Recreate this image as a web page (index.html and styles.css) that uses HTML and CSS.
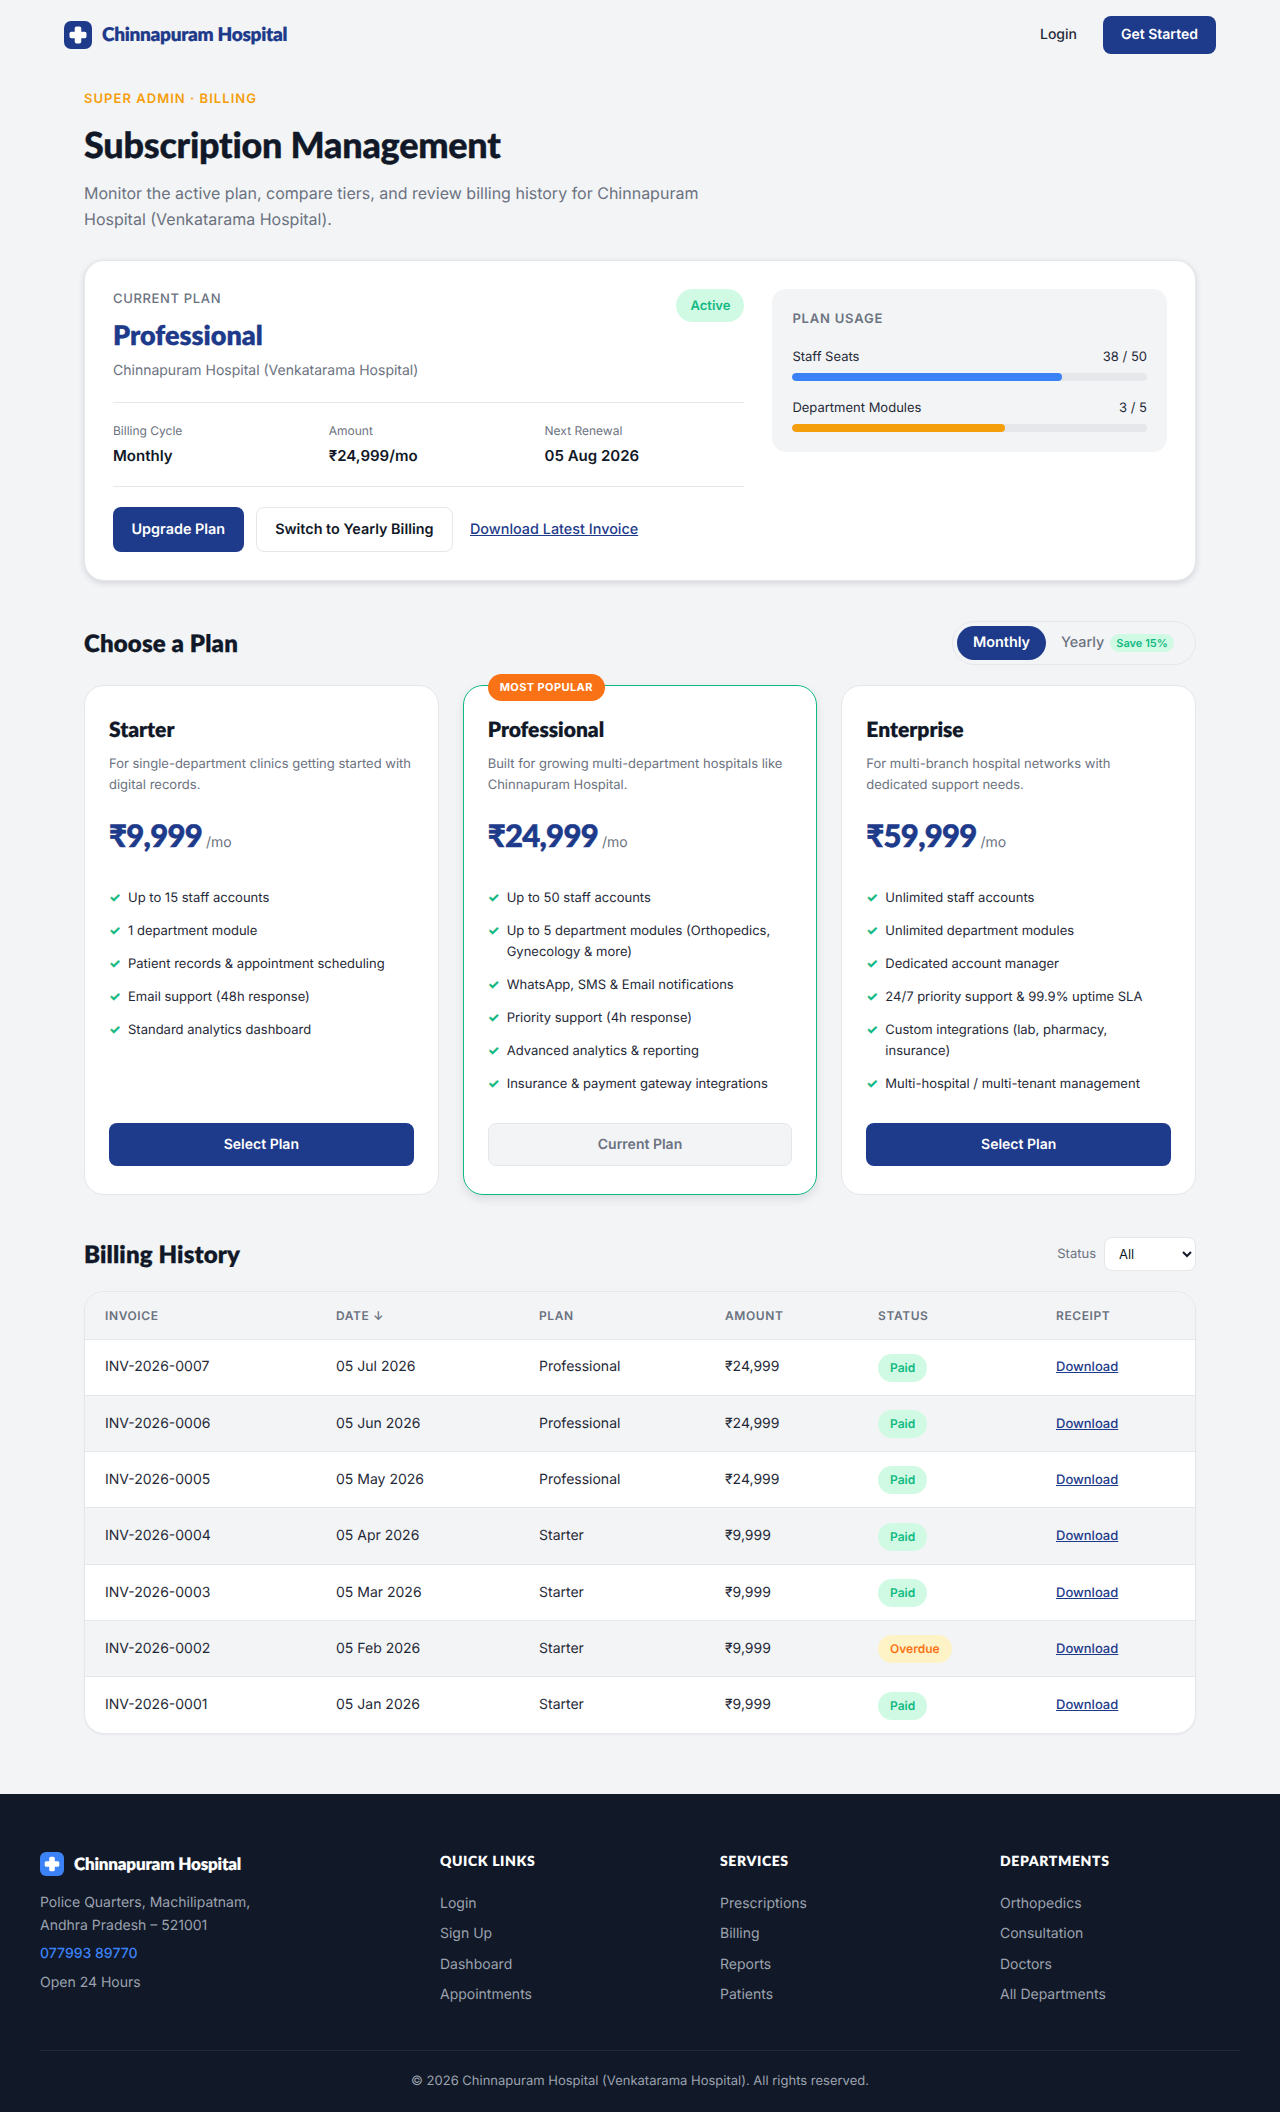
FILE: index.html
```html
<!DOCTYPE html>
<html lang="en">
<head>
<meta charset="utf-8">
<title>Subscription Management</title>
<link rel="stylesheet" href="styles.css">
</head>
<body>
<header class="nav">
  <a class="brand" href="#">
    <svg class="logo" viewBox="0 0 28 28"><rect width="28" height="28" rx="7" fill="#1e3a8a"/><g fill="#fff"><rect x="10.75" y="5.5" width="6.5" height="17" rx="1.8"/><rect x="5.5" y="10.75" width="17" height="6.5" rx="1.8"/></g></svg>
    <span class="brand-name">Chinnapuram Hospital</span>
  </a>
  <nav class="nav-actions">
    <a class="nav-login" href="#">Login</a>
    <a class="nav-cta" href="#">Get Started</a>
  </nav>
</header>

<main class="page">
  <p class="eyebrow">SUPER ADMIN · BILLING</p>
  <h1 class="title">Subscription Management</h1>
  <p class="lede">Monitor the active plan, compare tiers, and review billing history for Chinnapuram Hospital (Venkatarama Hospital).</p>

  <section class="current">
    <div class="current-main">
      <div class="current-head">
        <div>
          <p class="current-label">CURRENT PLAN</p>
          <h2 class="current-name">Professional</h2>
          <p class="current-org">Chinnapuram Hospital (Venkatarama Hospital)</p>
        </div>
        <span class="badge badge-active">Active</span>
      </div>
      <div class="facts">
        <div><p class="fact-label">Billing Cycle</p><p class="fact-value">Monthly</p></div>
        <div><p class="fact-label">Amount</p><p class="fact-value">₹24,999/mo</p></div>
        <div><p class="fact-label">Next Renewal</p><p class="fact-value">05 Aug 2026</p></div>
      </div>
      <div class="current-actions">
        <a class="btn btn-primary" href="#">Upgrade Plan</a>
        <a class="btn btn-outline" href="#">Switch to Yearly Billing</a>
        <a class="invoice-link" href="#">Download Latest Invoice</a>
      </div>
    </div>
    <aside class="usage">
      <p class="usage-title">PLAN USAGE</p>
      <div class="usage-row"><span>Staff Seats</span><span>38 / 50</span></div>
      <div class="bar"><div class="fill fill-blue" style="width:76%"></div></div>
      <div class="usage-row"><span>Department Modules</span><span>3 / 5</span></div>
      <div class="bar"><div class="fill fill-amber" style="width:60%"></div></div>
    </aside>
  </section>

  <div class="section-head plans-head">
    <h2 class="section-title">Choose a Plan</h2>
    <div class="toggle">
      <span class="toggle-on">Monthly</span>
      <span class="toggle-off">Yearly <span class="save">Save 15%</span></span>
    </div>
  </div>

  <section class="plans">
    <article class="plan">
      <h3 class="plan-name">Starter</h3>
      <p class="plan-desc">For single-department clinics getting started with digital records.</p>
      <p class="plan-price"><span class="amount">₹9,999</span> <span class="per">/mo</span></p>
      <ul class="features">
        <li>Up to 15 staff accounts</li>
        <li>1 department module</li>
        <li>Patient records &amp; appointment scheduling</li>
        <li>Email support (48h response)</li>
        <li>Standard analytics dashboard</li>
      </ul>
      <a class="btn btn-primary btn-block" href="#">Select Plan</a>
    </article>
    <article class="plan plan-featured">
      <span class="popular">MOST POPULAR</span>
      <h3 class="plan-name">Professional</h3>
      <p class="plan-desc">Built for growing multi-department hospitals like Chinnapuram Hospital.</p>
      <p class="plan-price"><span class="amount">₹24,999</span> <span class="per">/mo</span></p>
      <ul class="features">
        <li>Up to 50 staff accounts</li>
        <li>Up to 5 department modules (Orthopedics, Gynecology &amp; more)</li>
        <li>WhatsApp, SMS &amp; Email notifications</li>
        <li>Priority support (4h response)</li>
        <li>Advanced analytics &amp; reporting</li>
        <li>Insurance &amp; payment gateway integrations</li>
      </ul>
      <a class="btn btn-current btn-block" href="#">Current Plan</a>
    </article>
    <article class="plan">
      <h3 class="plan-name">Enterprise</h3>
      <p class="plan-desc">For multi-branch hospital networks with dedicated support needs.</p>
      <p class="plan-price"><span class="amount">₹59,999</span> <span class="per">/mo</span></p>
      <ul class="features">
        <li>Unlimited staff accounts</li>
        <li>Unlimited department modules</li>
        <li>Dedicated account manager</li>
        <li>24/7 priority support &amp; 99.9% uptime SLA</li>
        <li>Custom integrations (lab, pharmacy, insurance)</li>
        <li>Multi-hospital / multi-tenant management</li>
      </ul>
      <a class="btn btn-primary btn-block" href="#">Select Plan</a>
    </article>
  </section>

  <div class="section-head history-head">
    <h2 class="section-title">Billing History</h2>
    <label class="status-filter">Status
      <select class="status-select"><option>All</option><option>Paid</option><option>Overdue</option></select>
    </label>
  </div>

  <div class="table-wrap">
    <table class="history">
      <thead>
        <tr>
          <th class="col-invoice">INVOICE</th>
          <th class="col-date">DATE ↓</th>
          <th class="col-plan">PLAN</th>
          <th class="col-amount">AMOUNT</th>
          <th class="col-status">STATUS</th>
          <th class="col-receipt">RECEIPT</th>
        </tr>
      </thead>
      <tbody>
        <tr><td>INV-2026-0007</td><td>05 Jul 2026</td><td>Professional</td><td>₹24,999</td><td><span class="pill pill-paid">Paid</span></td><td><a class="dl" href="#">Download</a></td></tr>
        <tr><td>INV-2026-0006</td><td>05 Jun 2026</td><td>Professional</td><td>₹24,999</td><td><span class="pill pill-paid">Paid</span></td><td><a class="dl" href="#">Download</a></td></tr>
        <tr><td>INV-2026-0005</td><td>05 May 2026</td><td>Professional</td><td>₹24,999</td><td><span class="pill pill-paid">Paid</span></td><td><a class="dl" href="#">Download</a></td></tr>
        <tr><td>INV-2026-0004</td><td>05 Apr 2026</td><td>Starter</td><td>₹9,999</td><td><span class="pill pill-paid">Paid</span></td><td><a class="dl" href="#">Download</a></td></tr>
        <tr><td>INV-2026-0003</td><td>05 Mar 2026</td><td>Starter</td><td>₹9,999</td><td><span class="pill pill-paid">Paid</span></td><td><a class="dl" href="#">Download</a></td></tr>
        <tr><td>INV-2026-0002</td><td>05 Feb 2026</td><td>Starter</td><td>₹9,999</td><td><span class="pill pill-overdue">Overdue</span></td><td><a class="dl" href="#">Download</a></td></tr>
        <tr><td>INV-2026-0001</td><td>05 Jan 2026</td><td>Starter</td><td>₹9,999</td><td><span class="pill pill-paid">Paid</span></td><td><a class="dl" href="#">Download</a></td></tr>
      </tbody>
    </table>
  </div>
</main>

<footer class="footer">
  <div class="footer-grid">
    <div class="footer-about">
      <a class="footer-brand" href="#">
        <svg class="footer-logo" viewBox="0 0 28 28"><rect width="28" height="28" rx="7" fill="#3b82f6"/><g fill="#fff"><rect x="10.75" y="5.5" width="6.5" height="17" rx="1.8"/><rect x="5.5" y="10.75" width="17" height="6.5" rx="1.8"/></g></svg>
        <span class="footer-brand-name">Chinnapuram Hospital</span>
      </a>
      <p class="footer-address">Police Quarters, Machilipatnam,<br>Andhra Pradesh – 521001</p>
      <p class="footer-phone">077993 89770</p>
      <p class="footer-hours">Open 24 Hours</p>
    </div>
    <div>
      <h4 class="footer-title">QUICK LINKS</h4>
      <ul class="footer-links"><li><a href="#">Login</a></li><li><a href="#">Sign Up</a></li><li><a href="#">Dashboard</a></li><li><a href="#">Appointments</a></li></ul>
    </div>
    <div>
      <h4 class="footer-title">SERVICES</h4>
      <ul class="footer-links"><li><a href="#">Prescriptions</a></li><li><a href="#">Billing</a></li><li><a href="#">Reports</a></li><li><a href="#">Patients</a></li></ul>
    </div>
    <div>
      <h4 class="footer-title">DEPARTMENTS</h4>
      <ul class="footer-links"><li><a href="#">Orthopedics</a></li><li><a href="#">Consultation</a></li><li><a href="#">Doctors</a></li><li><a href="#">All Departments</a></li></ul>
    </div>
  </div>
  <p class="footer-copy">© 2026 Chinnapuram Hospital (Venkatarama Hospital). All rights reserved.</p>
</footer>
</body>
</html>
```
FILE: styles.css
```css
* { box-sizing: border-box; }
html, body { margin: 0; padding: 0; }
body {
  background: #f3f4f6;
  color: #111827;
  font-family: Inter, "Liberation Sans", sans-serif;
  font-size: 14px;
  line-height: 1.6;
  text-rendering: geometricPrecision;
}
a { color: inherit; text-decoration: none; }
p, h1, h2, h3, h4, ul { margin: 0; padding: 0; }
ul { list-style: none; }

.nav {
  height: 70px;
  padding: 0 64px;
  display: flex;
  align-items: center;
  justify-content: space-between;
}
.brand { display: flex; align-items: center; gap: 10px; }
.logo { width: 28px; height: 28px; display: block; }
.brand-name {
  font-family: Lato, sans-serif;
  font-weight: 800;
  font-size: 19px;
  letter-spacing: -.3px;
  color: #1e3a8a;
  -webkit-text-stroke: .2px currentColor;
}
.nav-actions { display: flex; align-items: center; gap: 26px; }
.nav-login { font-size: 14px; font-weight: 500; color: #1f2937; }
.nav-cta {
  background: #1e3a8a;
  color: #fff;
  font-size: 14px;
  font-weight: 600;
  height: 38px;
  line-height: 38px;
  padding: 0 18px;
  border-radius: 8px;
}

.page { padding: 20px 84px 60px; }
.eyebrow {
  color: #f59e0b;
  font-size: 13px;
  font-weight: 600;
  letter-spacing: 1.04px;
  line-height: 18px;
}
.title {
  font-family: Lato, sans-serif;
  font-weight: 900;
  font-size: 36px;
  line-height: 44px;
  letter-spacing: -.25px;
  margin-top: 14px;
  color: #111827;
  -webkit-text-stroke: .4px currentColor;
}
.lede {
  color: #6b7280;
  font-size: 16px;
  line-height: 26px;
  max-width: 640px;
  margin-top: 14px;
}

.current {
  margin-top: 28px;
  background: #fff;
  border: 1px solid #e5e7eb;
  border-radius: 20px;
  box-shadow: 0 2px 6px rgba(17, 24, 39, .14);
  padding: 28px;
  display: grid;
  grid-template-columns: 1.6fr 1fr;
  gap: 28px;
  align-items: start;
}
.current-head { display: flex; justify-content: space-between; align-items: flex-start; padding-bottom: 20px; border-bottom: 1px solid #e5e7eb; }
.current-label { font-size: 13px; font-weight: 500; letter-spacing: .65px; color: #6b7280; line-height: 21px; }
.current-name {
  font-family: Lato, sans-serif;
  font-weight: 800;
  font-size: 27px;
  line-height: 36px;
  color: #1e3a8a;
  margin-top: 7px;
  -webkit-text-stroke: .3px currentColor;
}
.current-org { font-size: 14px; line-height: 22px; color: #6b7280; margin-top: 7px; }
.badge { display: inline-block; border-radius: 999px; }
.badge-active { background: #d1fae5; color: #10b981; font-size: 13px; font-weight: 600; padding: 7px 14px 5px; line-height: 21px; }
.facts {
  display: grid;
  grid-template-columns: repeat(3, 1fr);
  gap: 16px;
  padding: 18px 0;
  border-bottom: 1px solid #e5e7eb;
}
.fact-label { font-size: 12px; line-height: 19px; color: #6b7280; }
.fact-value { font-size: 15px; font-weight: 600; line-height: 24px; margin-top: 4px; color: #111827; }
.current-actions { display: flex; align-items: center; gap: 12px; margin-top: 20px; }
.btn {
  display: inline-block;
  border-radius: 8px;
  font-size: 14.4px;
  font-weight: 600;
  text-align: center;
  height: 45px;
  line-height: 46px;
  padding: 0 18.5px;
}
.btn-primary { background: #1e3a8a; color: #fff; }
.btn-outline { background: #fff; color: #111827; border: 1px solid #e5e7eb; line-height: 44px; }
.invoice-link { color: #1e3a8a; font-size: 14.4px; font-weight: 500; text-decoration: underline; margin-left: 5px; }
.btn-block { display: block; height: 43px; line-height: 44px; margin-top: auto; font-size: 14px; }
.btn-current { background: #f3f4f6; color: #6b7280; border: 1px solid #e5e7eb; line-height: 42px; }

.usage { background: #f3f4f6; border-radius: 14px; padding: 20px; height: 163px; }
.usage-title { font-size: 13px; font-weight: 600; letter-spacing: .8px; color: #6b7280; line-height: 21px; }
.usage-row { display: flex; justify-content: space-between; font-size: 13px; color: #1f2937; line-height: 22px; margin-top: 16px; }
.bar { height: 8px; background: #e5e7eb; border-radius: 999px; margin-top: 5px; overflow: hidden; }
.fill { height: 100%; border-radius: 999px; }
.fill-blue { background: #3b82f6; }
.fill-amber { background: #f59e0b; }

.section-head { display: flex; align-items: center; justify-content: space-between; }
.plans-head { margin-top: 40px; height: 44px; }
.history-head { margin-top: 42px; height: 34px; }
.section-title {
  font-family: Lato, sans-serif;
  font-weight: 800;
  font-size: 24px;
  line-height: 32px;
  letter-spacing: .15px;
  margin-top: 2px;
  color: #111827;
  -webkit-text-stroke: .25px currentColor;
}
.toggle {
  display: flex;
  align-items: center;
  height: 44px;
  padding: 4px;
  border: 1px solid #e5e7eb;
  border-radius: 999px;
  width: 244px;
}
.toggle-on {
  background: #1e3a8a;
  color: #fff;
  font-size: 14.4px;
  font-weight: 600;
  height: 34px;
  line-height: 34px;
  width: 89px;
  text-align: center;
  border-radius: 999px;
}
.toggle-off { color: #6b7280; font-size: 14.4px; font-weight: 500; margin-left: 15px; display: flex; align-items: center; gap: 6px; }
.save { background: #d1fae5; color: #10b981; font-size: 11px; font-weight: 600; height: 18px; line-height: 18px; padding: 0 6px; border-radius: 999px; }

.plans { display: grid; grid-template-columns: repeat(3, 1fr); gap: 24px; margin-top: 20px; }
.plan {
  position: relative;
  display: flex;
  flex-direction: column;
  background: #fff;
  border: 1px solid #e5e7eb;
  border-radius: 20px;
  padding: 29px 24px 28px;
  height: 510px;
}
.plan-featured { border: 1.5px solid #10b981; box-shadow: 0 4px 10px rgba(17, 24, 39, .1); }
.popular {
  position: absolute;
  top: -12px;
  left: 24px;
  background: #f97316;
  color: #fff;
  font-size: 11px;
  font-weight: 700;
  letter-spacing: .4px;
  line-height: 27px;
  height: 27px;
  padding: 0 12px;
  border-radius: 999px;
}
.plan-name {
  font-family: Lato, sans-serif;
  font-weight: 800;
  font-size: 21px;
  line-height: 30px;
  color: #111827;
  -webkit-text-stroke: .2px currentColor;
}
.plan-desc { font-size: 13px; line-height: 20.8px; color: #6b7280; margin-top: 9px; }
.plan-price { margin-top: 15px; line-height: 48px; }
.amount {
  font-family: Lato, "Noto Sans", sans-serif;
  font-weight: 900;
  font-size: 31px;
  letter-spacing: -.7px;
  color: #1e3a8a;
  -webkit-text-stroke: .6px currentColor;
}
.per { font-size: 14px; color: #6b7280; }
.features { margin-top: 21px; display: flex; flex-direction: column; gap: 12px; }
.features li { position: relative; padding-left: 19px; font-size: 13px; line-height: 21px; color: #1f2937; }
.features li::before { content: "✓"; position: absolute; left: 0; top: 0; color: #10b981; font-weight: 700; font-size: 13px; -webkit-text-stroke: .25px currentColor; }

.status-filter { display: flex; align-items: center; gap: 8px; font-size: 13px; color: #6b7280; }
.status-select {
  width: 92px;
  height: 34px;
  padding: 0 10px;
  border: 1px solid #e5e7eb;
  border-radius: 8px;
  background: #fff;
  color: #111827;
  font-family: inherit;
  font-size: 13px;
}

.table-wrap { margin-top: 20px; background: #fff; border: 1px solid #e5e7eb; border-radius: 20px; overflow: hidden; box-shadow: 0 1px 2px rgba(17, 24, 39, .05); }
.history { width: 100%; border-collapse: collapse; table-layout: fixed; }
.history th {
  background: #f3f4f6;
  color: #6b7280;
  font-size: 12px;
  font-weight: 600;
  letter-spacing: .6px;
  text-align: left;
  padding: 0 20px;
  height: 47px;
  border-bottom: 1px solid #e5e7eb;
}
.col-invoice { width: 231px; }
.col-date { width: 203px; }
.col-plan { width: 186px; }
.col-amount { width: 153px; }
.col-status { width: 178px; }
.history td { height: 56.3px; padding: 1px 20px 0; font-size: 14px; color: #1f2937; border-bottom: 1px solid #e5e7eb; }
.history tbody tr:nth-child(even) td { background: #f3f4f6; }
.history tbody tr:last-child td { border-bottom: 0; }
.pill { display: inline-block; font-size: 12px; font-weight: 600; line-height: 20px; padding: 4px 12px; border-radius: 999px; }
.pill-paid { background: #d1fae5; color: #10b981; }
.pill-overdue { background: #fef3c7; color: #f97316; }
.dl { color: #1e3a8a; font-size: 13px; font-weight: 500; text-decoration: underline; }

.footer { background: #111827; padding: 56px 40px 0; height: 318px; }
.footer-grid { display: grid; grid-template-columns: 1.5fr 1fr 1fr 1fr; gap: 40px; height: 201px; border-bottom: 1px solid #1f2937; }
.footer-brand { display: flex; align-items: center; gap: 10px; }
.footer-logo { width: 24px; height: 24px; display: block; }
.footer-brand-name {
  font-family: Lato, sans-serif;
  font-weight: 800;
  font-size: 17px;
  letter-spacing: -.2px;
  color: #fff;
  -webkit-text-stroke: .15px currentColor;
}
.footer-address { color: #9ca3af; font-size: 14px; line-height: 23px; margin-top: 14px; }
.footer-phone { color: #3b82f6; font-size: 14px; font-weight: 500; line-height: 23px; margin-top: 5px; }
.footer-hours { color: #9ca3af; font-size: 14px; line-height: 23px; margin-top: 6px; }
.footer-title { font-family: Lato, sans-serif; font-weight: 800; font-size: 14px; letter-spacing: .6px; color: #fff; line-height: 22px; }
.footer-links { margin-top: 21px; display: flex; flex-direction: column; gap: 8px; }
.footer-links li { font-size: 14px; line-height: 22.4px; color: #9ca3af; }
.footer-copy { text-align: center; font-size: 13px; color: #9ca3af; line-height: 20px; margin-top: 20px; }
```
